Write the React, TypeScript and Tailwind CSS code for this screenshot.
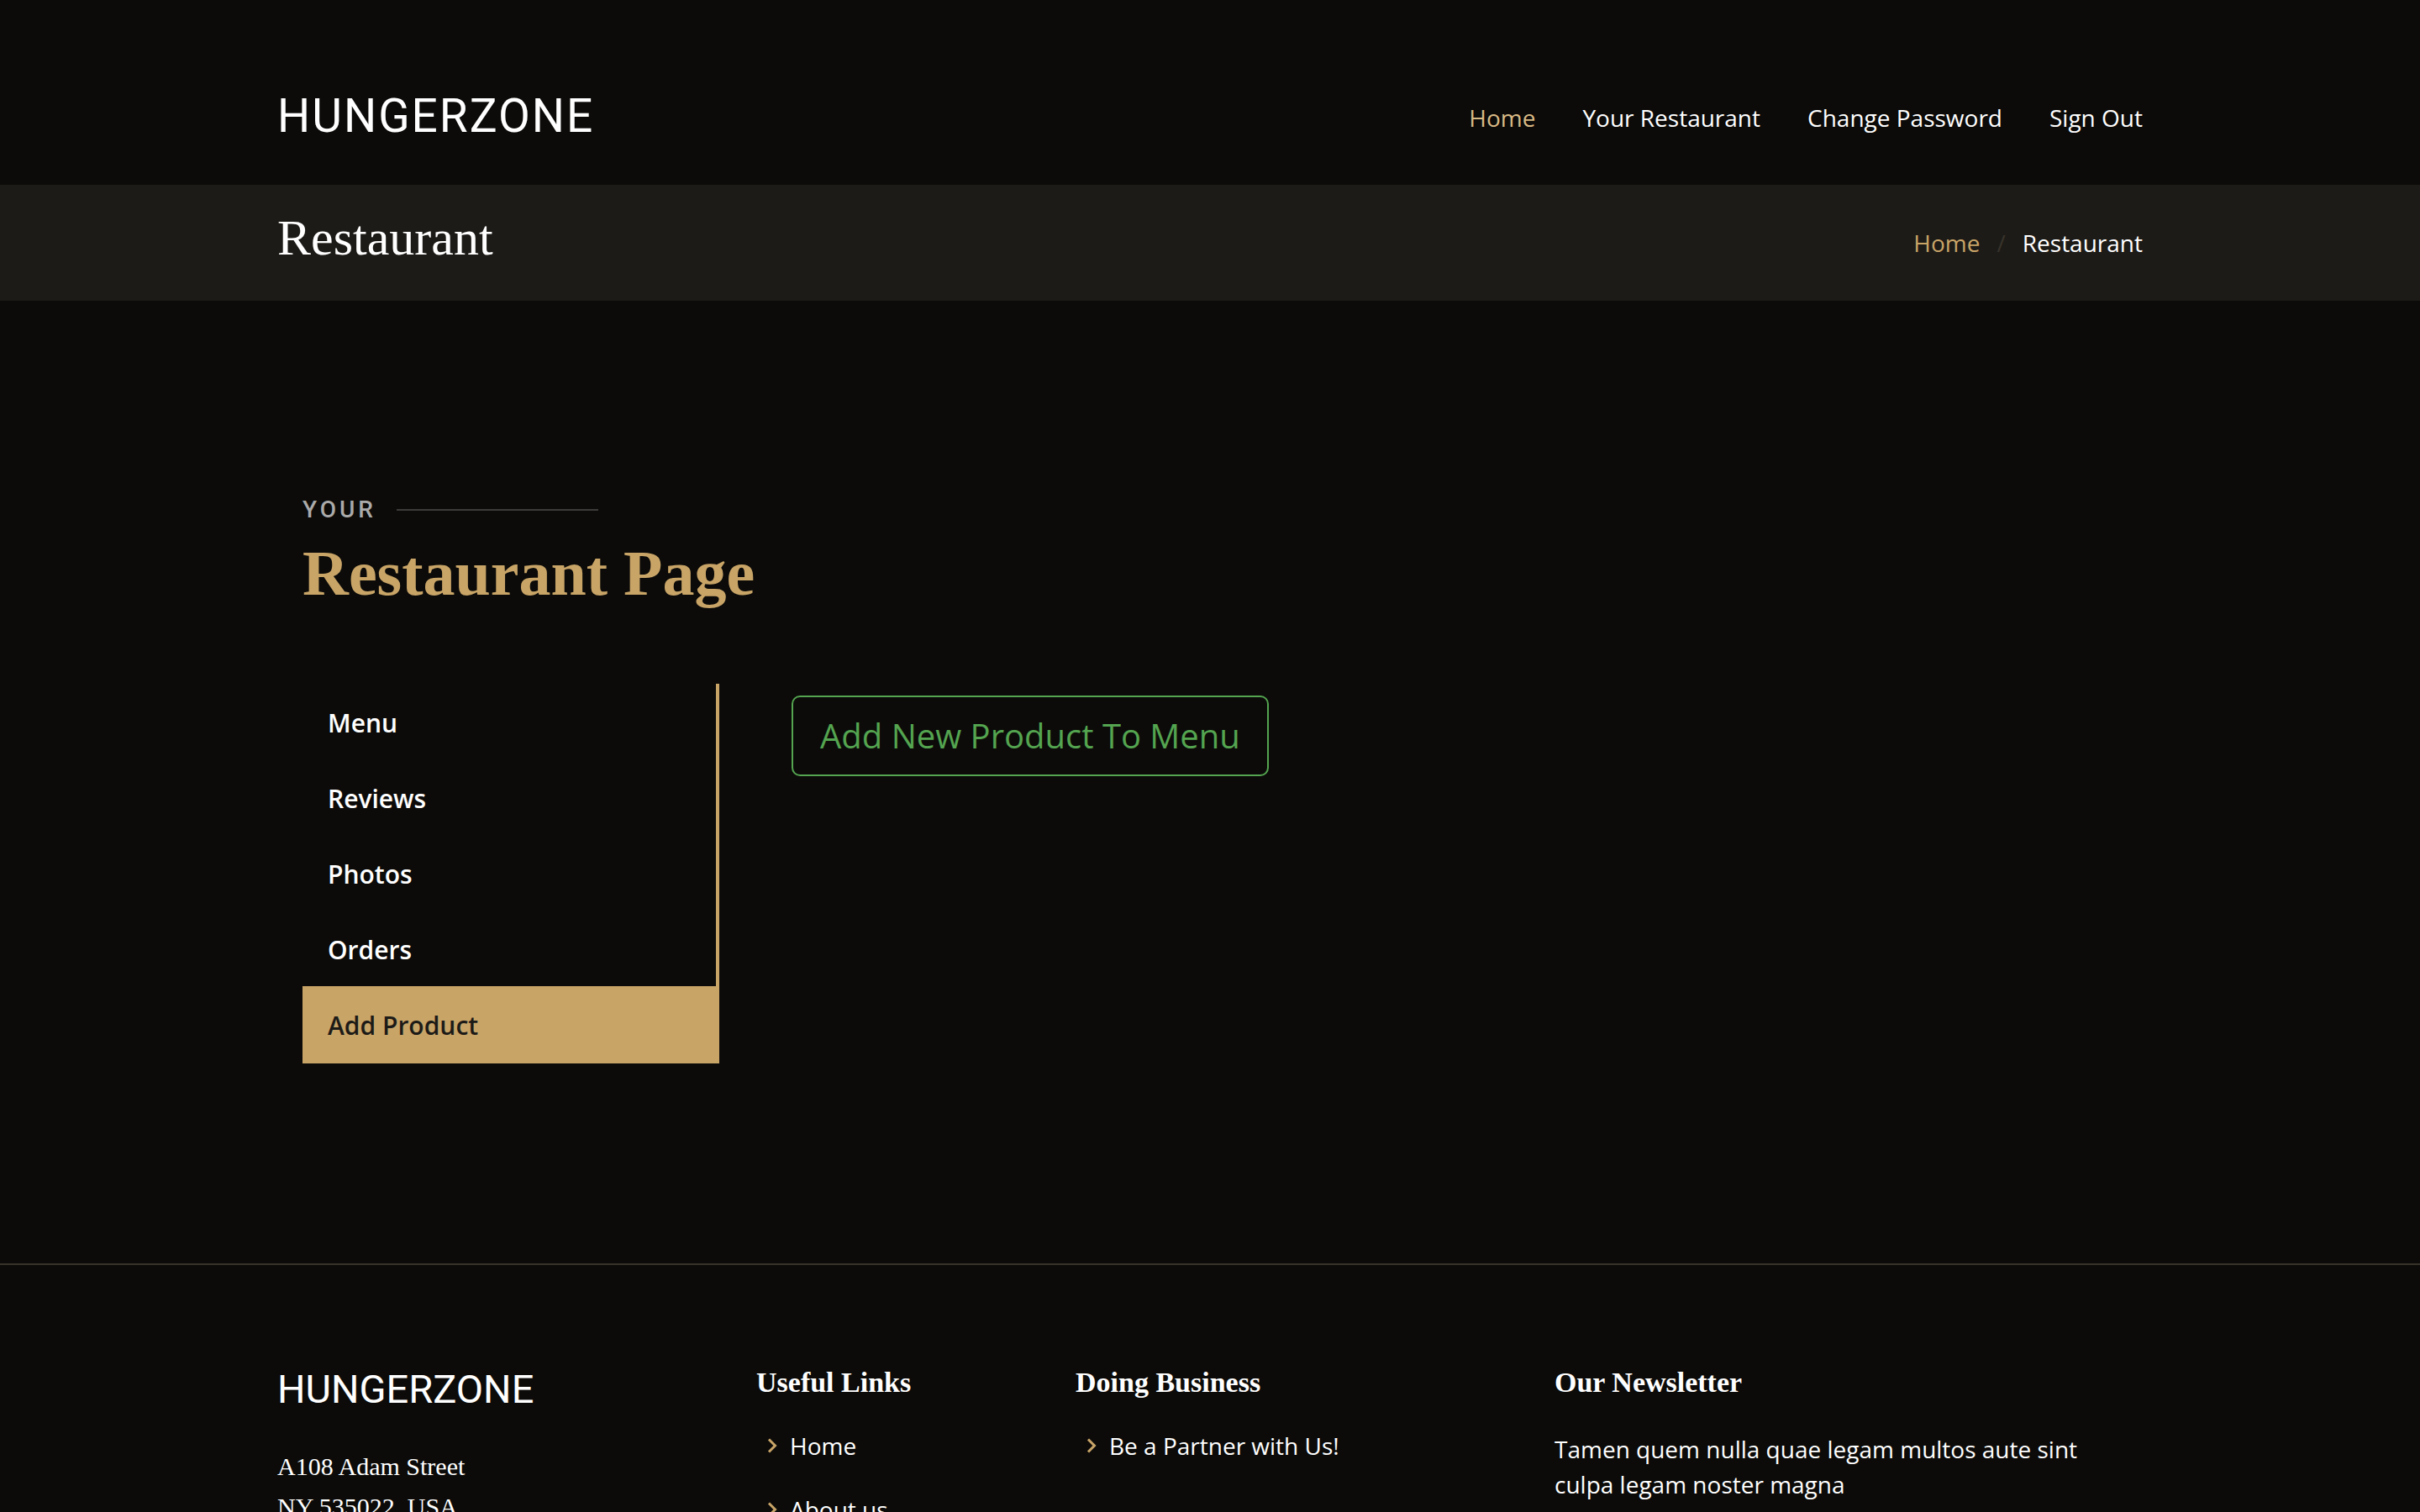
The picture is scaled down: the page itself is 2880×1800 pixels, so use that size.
const navLinks = ["Home", "Your Restaurant", "Change Password", "Sign Out"];
const tabs = ["Menu", "Reviews", "Photos", "Orders", "Add Product"];

function Chevron() {
  return (
    <svg viewBox="0 0 24 24" className="size-9 fill-[#c8a467]" aria-hidden="true">
      <path d="M10.707 17.707 16.414 12l-5.707-5.707-1.414 1.414L13.586 12l-4.293 4.293z" />
    </svg>
  );
}

function FooterLinks({ title, links }: { title: string; links: string[] }) {
  return (
    <div>
      <h4 className="font-['Liberation_Serif',serif] text-[34px] leading-[40px] font-bold">{title}</h4>
      <ul className="mt-[34px] flex flex-col gap-[34px]">
        {links.map((link) => (
          <li key={link} className="flex items-center gap-1">
            <Chevron />
            <a href="#" className="leading-[42px]">
              {link}
            </a>
          </li>
        ))}
      </ul>
    </div>
  );
}

export default function App() {
  return (
    <div className="flex h-screen flex-col overflow-hidden bg-[#0c0b09] font-['Open_Sans',sans-serif] text-[28px] leading-[42px] text-white">
      <header className="pt-[100px] pb-11">
        <div className="mx-auto flex w-full max-w-[2280px] items-center justify-between px-[30px]">
          <a href="#" className="font-['Roboto',sans-serif] text-[55px] leading-[76px] tracking-[2px]">
            HUNGERZONE
          </a>
          <nav className="flex gap-14 pt-1">
            {navLinks.map((link, i) => (
              <a key={link} href="#" className={i === 0 ? "text-[#d9ba85]" : "text-white"}>
                {link}
              </a>
            ))}
          </nav>
        </div>
      </header>

      <section className="bg-[#1d1b17] pt-7 pb-10">
        <div className="mx-auto flex w-full max-w-[2280px] items-center justify-between px-[30px]">
          <h2 className="font-['Liberation_Serif',serif] text-[60px] leading-[70px]">Restaurant</h2>
          <ol className="flex gap-5 pt-3">
            <li>
              <a href="#" className="text-[#c8a467]">
                Home
              </a>
            </li>
            <li aria-hidden="true" className="text-[#37332b]">
              /
            </li>
            <li>Restaurant</li>
          </ol>
        </div>
      </section>

      <main className="grow">
        <div className="mx-auto w-full max-w-[2280px] px-[60px] pt-[228px]">
          <div className="flex items-center gap-6">
            <h2 className="font-['Roboto',sans-serif] font-medium tracking-[4px] text-[#aaaaaa]">YOUR</h2>
            <span className="h-[2px] w-60 bg-[#3d3c3a]" />
          </div>
          <p className="font-['Liberation_Serif',serif] text-[76px] leading-[108px] font-bold text-[#c8a467]">Restaurant Page</p>

          <div className="mt-[78px] flex items-start">
            <div role="tablist" aria-orientation="vertical" className="flex w-[496px] shrink-0 flex-col border-r-4 border-[#c8a467]">
              {tabs.map((tab) => (
                <button
                  key={tab}
                  type="button"
                  role="tab"
                  aria-selected={tab === "Add Product"}
                  className="-mb-0.5 h-[92px] px-[30px] pt-0.5 text-left text-[30px] font-semibold last:mb-0 aria-selected:bg-[#c8a467] aria-selected:text-[#1d1b17]"
                >
                  {tab}
                </button>
              ))}
            </div>
            <div role="tabpanel" className="pt-[14px] pl-[86px]">
              <button type="button" className="rounded-[10px] border-2 border-[#54a450] px-8 py-4 text-[40px] leading-[60px] text-[#54a450]">
                Add New Product To Menu
              </button>
            </div>
          </div>
        </div>
      </main>

      <footer className="h-[296px] border-t-2 border-[#37332b] pt-[120px]">
        <div className="mx-auto grid w-full max-w-[2280px] grid-cols-[3fr_2fr_3fr_4fr] *:px-[30px]">
          <div>
            <h3 className="font-['Roboto',sans-serif] text-[47px] leading-[56px]">HUNGERZONE</h3>
            <p className="mt-10 font-['Liberation_Serif',serif] text-[30px] leading-[48px]">
              A108 Adam Street
              <br />
              NY 535022, USA
            </p>
          </div>
          <FooterLinks title="Useful Links" links={["Home", "About us"]} />
          <FooterLinks title="Doing Business" links={["Be a Partner with Us!"]} />
          <div>
            <h4 className="font-['Liberation_Serif',serif] text-[34px] leading-[40px] font-bold">Our Newsletter</h4>
            <p className="mt-[38px] pr-5">Tamen quem nulla quae legam multos aute sint culpa legam noster magna</p>
          </div>
        </div>
      </footer>
    </div>
  );
}
